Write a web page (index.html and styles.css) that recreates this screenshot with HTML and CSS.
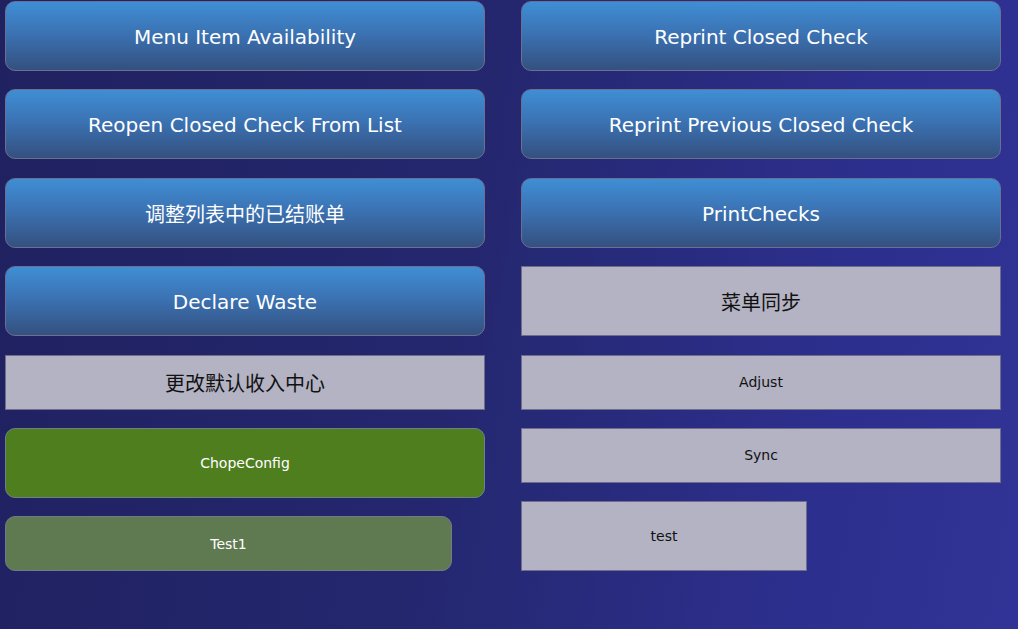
FILE: index.html
```html
<!DOCTYPE html>
<html>
<head>
<meta charset="utf-8">
<link rel="stylesheet" href="styles.css">
</head>
<body>
<div class="page">
  <div class="col">
    <div class="btn blue tall">Menu Item Availability</div>
    <div class="btn blue tall">Reopen Closed Check From List</div>
    <div class="btn blue tall cjk">调整列表中的已结账单</div>
    <div class="btn blue tall">Declare Waste</div>
    <div class="btn grey short cjk">更改默认收入中心</div>
    <div class="btn green tall small">ChopeConfig</div>
    <div class="btn olive short small test1">Test1</div>
  </div>
  <div class="col">
    <div class="btn blue tall">Reprint Closed Check</div>
    <div class="btn blue tall">Reprint Previous Closed Check</div>
    <div class="btn blue tall">PrintChecks</div>
    <div class="btn grey tall cjk">菜单同步</div>
    <div class="btn grey short small">Adjust</div>
    <div class="btn grey short small">Sync</div>
    <div class="btn grey tall small test">test</div>
  </div>
</div>
</body>
</html>
```

FILE: styles.css
```css
html, body {
  margin: 0;
  padding: 0;
  width: 1018px;
  height: 629px;
  overflow: hidden;
}
body {
  background: linear-gradient(100deg, #1f2160 0%, #24276e 45%, #2d2f8e 80%, #313396 100%);
  font-family: "DejaVu Sans", "Noto Sans CJK SC", sans-serif;
}
.page {
  display: grid;
  grid-template-columns: 480px 480px;
  column-gap: 36px;
  padding: 1px 0 0 5px;
}
.col {
  display: flex;
  flex-direction: column;
  align-items: flex-start;
  gap: 18.4px;
}
.btn {
  box-sizing: border-box;
  width: 480px;
  display: flex;
  align-items: center;
  justify-content: center;
  font-size: 20px;
}
.tall { height: 70px; }
.short { height: 55px; }
.blue {
  border: 1px solid #6b6f92;
  border-radius: 10px;
  background: linear-gradient(to bottom, #3f8ed4 0%, #3b73b4 45%, #34507f 100%);
  color: #ffffff;
  padding-top: 2px;
}
.grey {
  border: 1px solid #6e6e8c;
  background: #b3b3c3;
  color: #111111;
}
.green {
  border: 1px solid #6f7f8a;
  border-radius: 10px;
  background: #4f7e1f;
  color: #ffffff;
}
.olive {
  border: 1px solid #707a8a;
  border-radius: 10px;
  background: #5f7a50;
  color: #ffffff;
}
.cjk {
  font-family: "Noto Sans CJK SC", sans-serif;
  font-size: 20px;
}
.small {
  font-family: "DejaVu Sans", sans-serif;
  font-size: 14px;
}
.test1 { width: 447px; }
.test { width: 286px; }
```
